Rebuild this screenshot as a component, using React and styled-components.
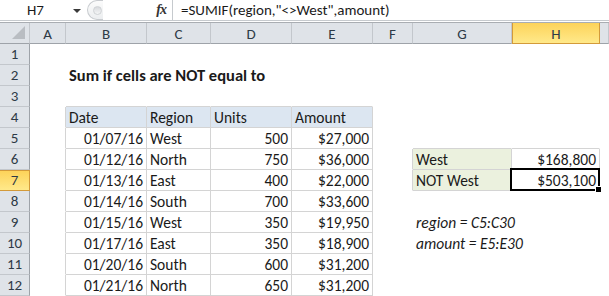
import React from 'react'
import styled, { createGlobalStyle } from 'styled-components'

const GlobalStyle = createGlobalStyle`
  html, body {
    margin: 0;
    padding: 0;
    background: #ffffff;
  }
  body {
    font-family: Carlito, Lato, 'Liberation Sans', sans-serif;
    color: #1a1a1a;
    overflow: hidden;
  }
`

const COLS = [30, 36, 81, 64, 81, 81, 40, 99, 88]
const LETTERS = ['A', 'B', 'C', 'D', 'E', 'F', 'G', 'H']
const GRID = '#d4d4d4'

const Page = styled.div`
  width: 609px;
  height: 296px;
  display: flex;
  flex-direction: column;
  overflow: hidden;
`

const FormulaBar = styled.div`
  display: flex;
  align-items: center;
  height: 20px;
  background: #ffffff;
  border-bottom: 1px solid #c6cace;
`
const NameBox = styled.div`
  width: 85px;
  height: 100%;
  display: flex;
  align-items: center;
  font-size: 15px;
  color: #1a1a1a;
  span {
    margin-left: 27px;
  }
`
const Caret = styled.div`
  margin-left: auto;
  margin-right: 4px;
  width: 0;
  height: 0;
  border-left: 4px solid transparent;
  border-right: 4px solid transparent;
  border-top: 4px solid #3a3a3a;
  margin-top: 1px;
`
const Grip = styled.div`
  width: 16px;
  height: 20px;
  margin-left: 2px;
  border-radius: 10px 0 0 10px;
  border: 1px solid #c8cbcf;
  border-right: none;
  box-sizing: border-box;
  background: linear-gradient(#fbfbfb, #eceef0);
  display: flex;
  align-items: center;
  padding-left: 5px;
  &::after {
    content: '';
    width: 7px;
    height: 7px;
    border-radius: 50%;
    background: linear-gradient(#d8dadd, #f4f5f6);
    border: 1px solid #cfd2d5;
  }
`
const FxBox = styled.div`
  width: 70px;
  height: 100%;
  display: flex;
  align-items: center;
  justify-content: flex-end;
  border-right: 1px solid #c6cace;
  box-sizing: border-box;
  padding-right: 6px;
  font-family: 'Liberation Serif', serif;
  font-style: italic;
  font-weight: bold;
  font-size: 14px;
  color: #333;
  letter-spacing: -1px;
`
const Formula = styled.div`
  padding-left: 8px;
  font-size: 15px;
  color: #1a1a1a;
  white-space: nowrap;
`
const Gap = styled.div`
  height: 2px;
  background: #ffffff;
  border-bottom: 1px solid #a9adb2;
`

const Sheet = styled.div`
  display: grid;
  grid-template-columns: ${COLS.map(c => c + 'px').join(' ')} 1fr;
  grid-template-rows: 21px repeat(12, 21px);
`

const ColHead = styled.div`
  box-sizing: border-box;
  display: flex;
  align-items: center;
  justify-content: center;
  font-size: 15px;
  color: #2e3a46;
  border-right: 1px solid ${p => (p.$active ? '#d39a3a' : '#c3c7cc')};
  border-bottom: 1px solid ${p => (p.$active ? '#d39a3a' : '#9ea3a9')};
  border-left: ${p => (p.$active ? '1px solid #d39a3a' : 'none')};
  background: ${p => (p.$active ? 'linear-gradient(#fdd35a, #ffe98a)' : '#dfe3e8')};
  padding-top: 1px;
`
const Corner = styled(ColHead)`
  position: relative;
  &::after {
    content: '';
    position: absolute;
    right: 4px;
    bottom: 4px;
    width: 0;
    height: 0;
    border-left: 13px solid transparent;
    border-bottom: 13px solid #b9bdc2;
  }
`
const RowHead = styled.div`
  box-sizing: border-box;
  display: flex;
  align-items: flex-end;
  justify-content: center;
  padding-bottom: 1px;
  font-size: 15px;
  color: #2e3a46;
  border-right: 1px solid ${p => (p.$active ? '#d39a3a' : '#9ea3a9')};
  border-bottom: 1px solid ${p => (p.$active ? '#d39a3a' : '#c3c7cc')};
  border-top: ${p => (p.$active ? '1px solid #d39a3a' : 'none')};
  background: ${p => (p.$active ? 'linear-gradient(#fdd35a, #ffe98a)' : '#dfe3e8')};
`
const Cell = styled.div`
  position: relative;
  box-sizing: border-box;
  display: flex;
  align-items: flex-end;
  justify-content: ${p => (p.$right ? 'flex-end' : 'flex-start')};
  padding: 0 3px 0 3px;
  font-size: ${p => (p.$bold ? '16.5px' : '15.5px')};
  line-height: 19px;
  white-space: nowrap;
  overflow: visible;
  font-weight: ${p => (p.$bold ? 700 : 400)};
  font-style: ${p => (p.$italic ? 'italic' : 'normal')};
  background: ${p => p.$bg || 'transparent'};
  border-right: 1px solid ${p => (p.$r ? GRID : 'transparent')};
  border-bottom: 1px solid ${p => (p.$b ? GRID : 'transparent')};
`
const Selection = styled.div`
  position: absolute;
  left: -2px;
  top: -2px;
  right: -1px;
  bottom: -1px;
  border: 2px solid #000;
  pointer-events: none;
  &::after {
    content: '';
    position: absolute;
    right: -4px;
    bottom: -4px;
    width: 5px;
    height: 5px;
    background: #000;
    border: 1px solid #fff;
  }
`

const rows = [
  ['01/07/16', 'West', 500, '$27,000'],
  ['01/12/16', 'North', 750, '$36,000'],
  ['01/13/16', 'East', 400, '$22,000'],
  ['01/14/16', 'South', 700, '$33,600'],
  ['01/15/16', 'West', 350, '$19,950'],
  ['01/17/16', 'East', 350, '$18,900'],
  ['01/20/16', 'South', 600, '$31,200'],
  ['01/21/16', 'North', 650, '$31,200'],
]

// content by [row][colIndex] where colIndex 1 = A
const content = {}
const put = (r, c, v) => { content[`${r}-${c}`] = v }
put(2, 2, { text: 'Sum if cells are NOT equal to', bold: true })
;['Date', 'Region', 'Units', 'Amount'].forEach((h, i) =>
  put(4, 2 + i, { text: h, bg: '#dce6f1' })
)
rows.forEach((r, i) => {
  put(5 + i, 2, { text: r[0], right: true })
  put(5 + i, 3, { text: r[1] })
  put(5 + i, 4, { text: String(r[2]), right: true })
  put(5 + i, 5, { text: r[3], right: true })
})
put(6, 7, { text: 'West', bg: '#ebf1de' })
put(6, 8, { text: '$168,800', right: true })
put(7, 7, { text: 'NOT West', bg: '#ebf1de' })
put(7, 8, { text: '$503,100', right: true, selected: true })
put(9, 7, { text: 'region = C5:C30', italic: true })
put(10, 7, { text: 'amount = E5:E30', italic: true })

const inTable = (r, c) =>
  (r >= 4 && r <= 12 && c >= 2 && c <= 5) ||
  (r >= 6 && r <= 7 && (c === 7 || c === 8))

export default function App () {
  const cells = []
  for (let r = 1; r <= 12; r++) {
    cells.push(
      <RowHead key={`h${r}`} $active={r === 7}>{r}</RowHead>
    )
    for (let c = 1; c <= 9; c++) {
      const v = content[`${r}-${c}`]
      const boxed = inTable(r, c)
      const rightLine = boxed || inTable(r, c + 1)
      const bottomLine = boxed || inTable(r + 1, c)
      cells.push(
        <Cell
          key={`${r}-${c}`}
          $r={rightLine}
          $b={bottomLine}
          $bg={v && v.bg}
          $right={v && v.right}
          $bold={v && v.bold}
          $italic={v && v.italic}
        >
          {v && v.text}
          {v && v.selected && <Selection />}
        </Cell>
      )
    }
  }

  return (
    <Page>
      <GlobalStyle />
      <FormulaBar>
        <NameBox>
          <span>H7</span>
          <Caret />
        </NameBox>
        <Grip />
        <FxBox>fx</FxBox>
        <Formula>=SUMIF(region,"&lt;&gt;West",amount)</Formula>
      </FormulaBar>
      <Gap />
      <Sheet>
        <Corner />
        {LETTERS.map(l => (
          <ColHead key={l} $active={l === 'H'}>{l}</ColHead>
        ))}
        <ColHead />
        {cells}
      </Sheet>
    </Page>
  )
}
